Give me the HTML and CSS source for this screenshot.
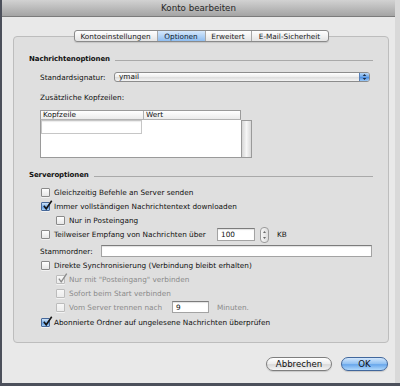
FILE: index.html
```html
<!DOCTYPE html>
<html lang="de">
<head>
    <meta charset="UTF-8">
    <title>Konto bearbeiten</title>
    <link rel="stylesheet" href="styles.css">
</head>
<body>
    <div class="window">
        <div class="titlebar">Konto bearbeiten</div>
        <div class="content">
            <div class="tabs">
                <div class="tab t1">Kontoeinstellungen</div>
                <div class="tab t2 active">Optionen</div>
                <div class="tab t3">Erweitert</div>
                <div class="tab t4">E-Mail-Sicherheit</div>
            </div>
            <div class="tabbox">
                <div class="section-title">Nachrichtenoptionen</div>
                <div class="field-row">
                    <span class="field-label sig">Standardsignatur:</span>
                    <div class="popup">
                        <span class="popup-text">ymail</span>
                        <span class="popup-arrows">
                            <svg width="10" height="10" viewBox="0 0 10 10">
                                <path d="M3 4 L5 1.6 L7 4 Z M3 6 L5 8.4 L7 6 Z" fill="#1d2d45"/>
                            </svg>
                        </span>
                    </div>
                </div>
                <div class="plain-label">Zusätzliche Kopfzeilen:</div>
                <div class="table">
                    <div class="thead">
                        <div class="th th-key">Kopfzeile</div>
                        <div class="th">Wert</div>
                    </div>
                    <div class="tbody">
                        <div class="cells">
                            <div class="edit-cell"></div>
                        </div>
                        <div class="scroll"></div>
                    </div>
                </div>

                <div class="section-title second">Serveroptionen</div>
                <div class="opt first">
                    <span class="cb"></span>
                    <span>Gleichzeitig Befehle an Server senden</span>
                </div>
                <div class="opt">
                    <span class="cb on"><svg viewBox="0 0 12 12"><path d="M2 6.2 L4.6 9.6 L10.6 0.8" fill="none" stroke="#151515" stroke-width="1.7"/></svg></span>
                    <span>Immer vollständigen Nachrichtentext downloaden</span>
                </div>
                <div class="opt sub">
                    <span class="cb"></span>
                    <span>Nur in Posteingang</span>
                </div>
                <div class="opt tall">
                    <span class="cb"></span>
                    <span class="opt-label partial">Teilweiser Empfang von Nachrichten über</span>
                    <div class="input size">100</div>
                    <div class="stepper">
                        <svg width="7" height="14" viewBox="0 0 7 14">
                            <path d="M2 5 L3.5 3 L5 5 Z M2 9 L3.5 11 L5 9 Z" fill="#6a6a6a"/>
                        </svg>
                    </div>
                    <span class="unit">KB</span>
                </div>
                <div class="field-row stamm">
                    <span class="field-label stamm-label">Stammordner:</span>
                    <div class="input wide"></div>
                </div>
                <div class="opt">
                    <span class="cb"></span>
                    <span>Direkte Synchronisierung (Verbindung bleibt erhalten)</span>
                </div>
                <div class="opt sub disabled">
                    <span class="cb"><svg viewBox="0 0 12 12"><path d="M2 6.2 L4.6 9.6 L10.6 0.8" fill="none" stroke="#8c8c8c" stroke-width="1.5"/></svg></span>
                    <span>Nur mit "Posteingang" verbinden</span>
                </div>
                <div class="opt sub disabled">
                    <span class="cb"></span>
                    <span>Sofort beim Start verbinden</span>
                </div>
                <div class="opt sub disabled">
                    <span class="cb"></span>
                    <span class="opt-label disconnect">Vom Server trennen nach</span>
                    <div class="input minutes">9</div>
                    <span class="unit">Minuten.</span>
                </div>
                <div class="opt last">
                    <span class="cb on"><svg viewBox="0 0 12 12"><path d="M2 6.2 L4.6 9.6 L10.6 0.8" fill="none" stroke="#151515" stroke-width="1.7"/></svg></span>
                    <span>Abonnierte Ordner auf ungelesene Nachrichten überprüfen</span>
                </div>
            </div>
            <div class="buttons">
                <button class="btn cancel">Abbrechen</button>
                <button class="btn ok">OK</button>
            </div>
        </div>
    </div>
</body>
</html>
```
FILE: styles.css
```css
* {
    box-sizing: border-box;
}

body {
    margin: 0;
    background: #4c505b;
    font-family: "Lucida Grande", "DejaVu Sans", sans-serif;
    font-size: 7.3px;
    color: #111;
}

.window {
    width: 398px;
    height: 383px;
    margin-left: 2px;
    background: #e9e9e9;
    border-right: 5px solid #d9d9d9;
}

.titlebar {
    height: 17px;
    display: flex;
    align-items: center;
    justify-content: center;
    background: linear-gradient(#d2d2d2, #a4a4a4);
    border-bottom: 1px solid #7b7b7b;
    font-size: 8.7px;
    color: #262626;
}

.content {
    display: flex;
    flex-direction: column;
    padding: 13px 6px 0 11px;
}

/* tabs */
.tabs {
    position: relative;
    z-index: 1;
    align-self: center;
    display: flex;
    height: 12px;
    margin-bottom: -6px;
    border: 1px solid #8a8a8a;
    border-radius: 3px;
    background: linear-gradient(#ffffff, #e4e4e4);
    box-shadow: 0 1px 1px rgba(0, 0, 0, 0.12);
    overflow: hidden;
}

.tab {
    display: flex;
    align-items: center;
    justify-content: center;
    border-left: 1px solid #a8a8a8;
    color: #202020;
}

.tab.t1 { width: 82px; border-left: none; }
.tab.t2 { width: 48px; }
.tab.t3 { width: 46px; }
.tab.t4 { width: 77px; }

.tab.active {
    background: linear-gradient(#d6e8fb, #8fbdf0);
    color: #0d1c33;
}

.tabbox {
    width: 376px;
    border: 1px solid #bdbdbd;
    border-radius: 4px;
    background: #dfdfdf;
    padding: 17px 15px 13px 15px;
}

.section-title {
    display: flex;
    align-items: flex-end;
    height: 10px;
    line-height: 10px;
    font-weight: bold;
    font-size: 7px;
    letter-spacing: -0.1px;
}

.section-title::after {
    content: "";
    flex: 1;
    margin: 0 0 3px 5px;
    border-bottom: 1px solid #a9a9a9;
}

.section-title.second {
    margin-top: 12px;
}

.field-row {
    display: flex;
    align-items: center;
    height: 10px;
    margin-top: 8px;
    padding-left: 11px;
}

.field-label.sig { width: 74px; }

.popup {
    display: flex;
    align-items: center;
    width: 256px;
    height: 10px;
    border: 1px solid #8c8c8c;
    border-radius: 3px;
    background: linear-gradient(#ffffff, #ececec 50%, #dedede 55%, #f4f4f4);
    overflow: hidden;
}

.popup-text {
    flex: 1;
    padding-left: 4px;
    line-height: 8px;
}

.popup-arrows {
    width: 10px;
    height: 8px;
    display: flex;
    align-items: center;
    justify-content: center;
    border-left: 1px solid #5780b8;
    background: linear-gradient(#b7d7f7, #6aa4e6 50%, #4f8fe0 55%, #9cc9f6);
}

.plain-label {
    height: 10px;
    line-height: 10px;
    margin-top: 11px;
    padding-left: 11px;
}

/* header table */
.table {
    width: 212px;
    margin: 7px 0 0 11px;
}

.thead {
    display: flex;
    width: 201px;
    height: 10px;
    border: 1px solid #9a9a9a;
    border-bottom-color: #b3b3b3;
    background: linear-gradient(#ffffff, #ebebeb);
}

.th {
    padding-left: 2px;
    line-height: 8px;
}

.th-key {
    width: 103px;
    border-right: 1px solid #b0b0b0;
}

.tbody {
    display: flex;
    height: 38px;
    border: 1px solid #9a9a9a;
    border-top: none;
    background: #ffffff;
}

.cells {
    width: 200px;
}

.edit-cell {
    width: 101px;
    height: 14px;
    border: 1px solid #c6c6c6;
    background: #fff;
    box-shadow: inset 0 1px 1px rgba(0, 0, 0, 0.08);
}

.scroll {
    flex: 1;
    border-left: 1px solid #9a9a9a;
    border-top: 1px solid #9a9a9a;
    background: linear-gradient(to right, #d6d6d6, #f6f6f6 50%, #d9d9d9);
}

/* options */
.opt {
    display: flex;
    align-items: center;
    gap: 4px;
    height: 14px;
    padding-left: 12px;
}

.opt.first { margin-top: 5px; }
.opt.sub { padding-left: 27px; }
.opt.tall { height: 15px; }
.opt.last { margin-top: 1px; }

.opt.disabled {
    color: #8b8b8b;
}

.cb {
    position: relative;
    flex: none;
    width: 9px;
    height: 9px;
    border: 1px solid #8a8a8a;
    border-radius: 1px;
    background: linear-gradient(#ffffff, #e6e6e6);
    box-shadow: 0 1px 0 rgba(255, 255, 255, 0.6);
}

.cb.on {
    border-color: #46689a;
    background: linear-gradient(#cfe3f8, #7fb2ea 50%, #5d9be4 55%, #a6d0f7);
}

.disabled .cb {
    border-color: #bcbcbc;
    background: linear-gradient(#f7f7f7, #ececec);
}

.cb svg {
    position: absolute;
    left: 0;
    top: -3px;
    width: 11px;
    height: 11px;
}

.opt-label.partial { width: 159px; }
.opt-label.disconnect { width: 99px; }

.input {
    display: flex;
    align-items: center;
    height: 12px;
    padding-left: 3px;
    border: 1px solid #a3a3a3;
    border-top-color: #7c7c7c;
    background: #fff;
    box-shadow: inset 0 1px 1px rgba(0, 0, 0, 0.12);
    color: #111;
}

.input.size {
    width: 38px;
    height: 13px;
}

.input.minutes {
    width: 37px;
}

.stepper {
    display: flex;
    align-items: center;
    justify-content: center;
    width: 9px;
    height: 16px;
    margin-left: 1px;
    border: 1px solid #9c9c9c;
    border-radius: 4px;
    background: linear-gradient(to right, #f6f6f6, #dcdcdc);
}

.unit {
    margin-left: 4px;
}

.field-row.stamm {
    height: 14px;
    margin-top: 2px;
}

.stamm-label { width: 61px; }

.input.wide {
    width: 271px;
}

/* buttons */
.buttons {
    display: flex;
    justify-content: flex-end;
    gap: 9px;
    margin-top: 14px;
    padding-right: 1px;
}

.btn {
    height: 14px;
    padding: 0;
    border-radius: 7px;
    border: 1px solid #7e7e7e;
    font-family: "Lucida Grande", "DejaVu Sans", sans-serif;
    font-size: 8.6px;
    color: #111;
    box-shadow: 0 1px 1px rgba(0, 0, 0, 0.15);
}

.btn.cancel {
    width: 66px;
    background: linear-gradient(#ffffff, #ececec 50%, #d9d9d9 55%, #f6f6f6);
}

.btn.ok {
    width: 47px;
    border-color: #41679c;
    background: linear-gradient(#d2e6fb, #8fc0f2 50%, #68a7ec 55%, #b0d8fb);
}
```
